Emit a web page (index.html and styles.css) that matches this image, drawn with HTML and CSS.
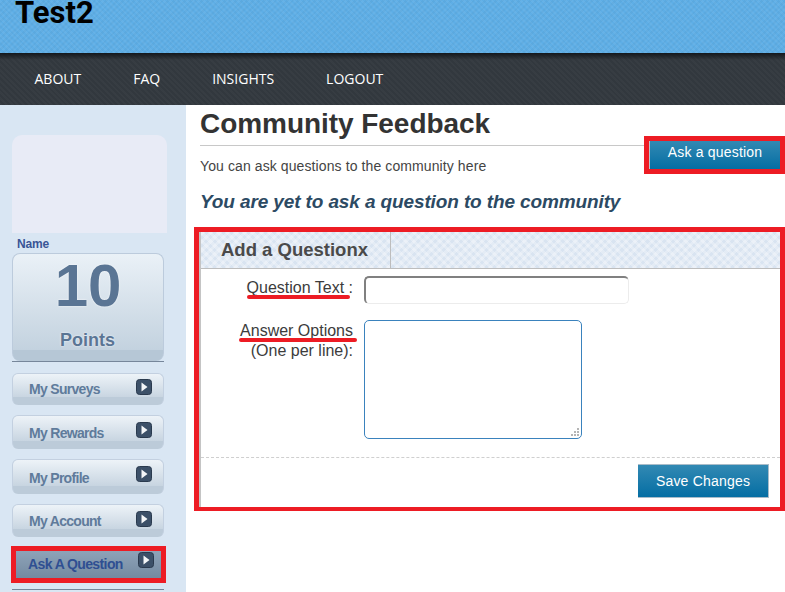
FILE: index.html
```html
<!DOCTYPE html>
<html lang="en">
<head>
<meta charset="utf-8">
<title>Community Feedback</title>
<link rel="stylesheet" href="styles.css">
</head>
<body>
<header class="banner"><h1 class="brand">Test2</h1></header>
<nav class="nav">
  <a>ABOUT</a><a>FAQ</a><a>INSIGHTS</a><a>LOGOUT</a>
</nav>
<div class="layout">
  <aside class="side">
    <div class="avatar"></div>
    <div class="name">Name</div>
    <div class="points"><div class="num">10</div><div class="plabel">Points</div></div>
    <div class="rule"></div>
    <a class="item h32"><span class="t1">My Surveys</span><svg class="arrow" viewBox="0 0 16 16"><rect x="0.5" y="0.5" width="15" height="15" rx="3" fill="#3c5068" stroke="#2a3a4e"/><path d="M5.500 3.500v9l6-4.500z" fill="#f4f6f8"/></svg></a>
    <a class="item h34"><span>My Rewards</span><svg class="arrow" viewBox="0 0 16 16"><rect x="0.5" y="0.5" width="15" height="15" rx="3" fill="#3c5068" stroke="#2a3a4e"/><path d="M5.500 3.500v9l6-4.500z" fill="#f4f6f8"/></svg></a>
    <a class="item h35"><span class="t3">My Profile</span><svg class="arrow" viewBox="0 0 16 16"><rect x="0.5" y="0.5" width="15" height="15" rx="3" fill="#3c5068" stroke="#2a3a4e"/><path d="M5.500 3.500v9l6-4.500z" fill="#f4f6f8"/></svg></a>
    <a class="item h33"><span class="t1">My Account</span><svg class="arrow" viewBox="0 0 16 16"><rect x="0.5" y="0.5" width="15" height="15" rx="3" fill="#3c5068" stroke="#2a3a4e"/><path d="M5.500 3.500v9l6-4.500z" fill="#f4f6f8"/></svg></a>
    <a class="item active"><span class="t3">Ask A Question</span><svg class="arrow" viewBox="0 0 16 16"><rect x="0.5" y="0.5" width="15" height="15" rx="3" fill="#3c5068" stroke="#2a3a4e"/><path d="M5.500 3.500v9l6-4.500z" fill="#f4f6f8"/></svg></a>
    <div class="rule last"></div>
  </aside>
  <main class="main">
    <div class="top">
      <div class="intro">
        <h2 class="title">Community Feedback</h2>
        <p class="lead">You can ask questions to the community here</p>
      </div>
      <div class="ask-mark"><button class="btn ask">Ask a question</button></div>
    </div>
    <h3 class="notice">You are yet to ask a question to the community</h3>
    <section class="panel">
      <div class="inner">
        <div class="tabs"><div class="tab">Add a Questionx</div></div>
        <div class="row first">
          <label class="label"><span class="marked">Question Text</span> :</label>
          <input class="field" type="text">
        </div>
        <div class="row second">
          <label class="label"><span class="marked">Answer Options</span><br>(One per line):</label>
          <div class="area-wrap">
            <textarea class="area"></textarea>
            <svg class="grip" viewBox="0 0 9 9"><path d="M7 1h2v2H7zM4 4h2v2H4zM7 4h2v2H7zM1 7h2v2H1zM4 7h2v2H4zM7 7h2v2H7z" fill="#b5b5b5"/></svg>
          </div>
        </div>
        <div class="actions"><button class="btn save">Save Changes</button></div>
      </div>
    </section>
  </main>
</div>
</body>
</html>
```
FILE: styles.css
```css
* { box-sizing: border-box; }
html, body { margin: 0; height: 592px; overflow: hidden; background: #fff; }
body { font-family: "Liberation Sans", Arial, sans-serif; color: #3a3a3a; }

.banner {
  height: 53px;
  background-color: #5eaee6;
  background-image:
    repeating-linear-gradient(45deg, rgba(255,255,255,.05) 0 2px, transparent 2px 4px),
    repeating-linear-gradient(-45deg, rgba(0,0,0,.03) 0 2px, transparent 2px 4px);
  padding-left: 15px;
  overflow: hidden;
}
.brand {
  margin: 0;
  font: 700 31px/26px Roboto, "Liberation Sans", sans-serif;
  color: #000;
}
.nav {
  height: 52px;
  display: flex;
  align-items: center;
  gap: 52px;
  padding-left: 34.5px;
  background-color: #32383e;
  background-image:
    linear-gradient(#14181c, rgba(20,24,28,0) 7px),
    repeating-linear-gradient(45deg, rgba(255,255,255,.025) 0 2px, transparent 2px 4px);
}
.nav a { font: 14px/1 "Open Sans", sans-serif; color: #fff; }

.layout { display: flex; height: 487px; }

.side {
  width: 186px;
  flex: none;
  background: #d9e6f3;
  padding: 30px 0 0 12px;
}
.avatar {
  width: 155px;
  height: 98px;
  background: #e8ebf6;
  border-radius: 10px 10px 0 0;
}
.name {
  margin: 4px 0 0 5px;
  height: 16px;
  font-size: 12px;
  line-height: 15px;
  font-weight: 700;
  letter-spacing: -.2px;
  color: #3a5596;
}
.points {
  width: 152px;
  height: 108px;
  border: 1px solid #bccbdc;
  border-bottom: 0;
  border-radius: 8px;
  background: linear-gradient(#eaf1f7, #c3d2df 90%, #b6c7d6 90%);
  text-align: center;
  color: #5a7594;
  font-weight: 700;
  text-shadow: 0 0 2px #fff;
}
.num { font-size: 60px; line-height: 62px; margin-top: 1px; }
.plabel { font-size: 18px; line-height: 20px; margin-top: 13px; padding-right: 1px; }
.rule { width: 152px; height: 1px; background: #76869a; }
.item {
  display: flex;
  justify-content: space-between;
  width: 152px;
  padding: 6px 11px 0 16px;
  border: 1px solid #c3d0e0;
  border-bottom: 0;
  border-radius: 6px;
  background: linear-gradient(#edf3f8, #c8d5e1 75%, #bccbd9 75%);
  font-size: 14px;
  font-weight: 700;
  letter-spacing: -.7px;
  color: #5f7b9b;
}
.item span { padding-top: 3px; }
.item span.t1 { padding-top: 2px; }
.item span.t3 { padding-top: 4px; }
.item + .item { margin-top: 10px; }
.h32 { height: 32px; margin-top: 11px; padding-top: 5px; }
.h34 { height: 34px; }
.h35 { height: 35px; }
.h33 { height: 33px; }
.arrow { width: 16px; height: 16px; flex: none; }
.item.active {
  height: 37px;
  margin: 9px 0 0 -1px;
  width: 155px;
  border: 5px solid #ed1c24;
  border-radius: 0;
  background: linear-gradient(#8ea3b8, #748aa1);
  color: #2f4f92;
  letter-spacing: -.6px;
  padding: 1px 7px 0 12px;
}
.rule.last { margin-top: 6px; }

.main { flex: 1; min-width: 0; padding-left: 8px; }
.top { display: flex; height: 84px; }
.intro { width: 450px; padding-left: 6px; }
.title {
  margin: 0;
  height: 41px;
  border-bottom: 1px solid #c8c8c8;
  font-size: 28px;
  line-height: 38px;
  letter-spacing: -.05px;
  font-weight: 700;
  color: #333;
}
.lead { margin: 12px 0 0; font-size: 14px; line-height: 16px; letter-spacing: .1px; color: #444; }
.ask-mark {
  margin-top: 31px;
  width: 141px;
  height: 38px;
  border: 5px solid #ed1c24;
}
.btn {
  display: block;
  border: 0;
  color: #fff;
  font: 14px/1 "Liberation Sans", sans-serif;
  letter-spacing: .2px;
  background: linear-gradient(#3289b3, #056ea3);
  padding: 0;
}
.ask { width: 100%; height: 100%; border-left: 1px solid #b8c4cc; padding-bottom: 6px; }
.notice {
  margin: 0;
  padding-left: 6px;
  height: 38px;
  font-size: 19px;
  line-height: 26px;
  letter-spacing: -.12px;
  font-weight: 700;
  font-style: italic;
  color: #2c4a63;
}
.panel { width: 591px; height: 284px; border: 5px solid #ed1c24; border-bottom-width: 4px; }
.inner { height: 100%; border-left: 2px solid #c4c4c4; }
.tabs {
  height: 37px;
  border-bottom: 1px solid #bdbdbd;
  background-color: #d9e4f1;
  background-image:
    repeating-linear-gradient(45deg, rgba(255,255,255,.28) 0 3px, transparent 3px 6px),
    repeating-linear-gradient(-45deg, rgba(255,255,255,.28) 0 3px, transparent 3px 6px);
}
.tab {
  width: 190px;
  height: 36px;
  border-right: 1px solid #bdbdbd;
  padding-left: 20px;
  font-size: 18.5px;
  line-height: 35px;
  font-weight: 700;
  color: #4a4a4a;
}
.row { display: grid; grid-template-columns: 152px 1fr; column-gap: 11px; }
.first { margin-top: 7px; height: 44px; }
.first .label { padding-top: 2px; }
.second { height: 137px; }
.label { font-size: 16px; line-height: 20px; text-align: right; color: #3c3c3c; padding-top: 1px; }
.marked { position: relative; }
.marked::after {
  content: "";
  position: absolute;
  left: 0;
  right: -6px;
  bottom: -3px;
  height: 4px;
  border-radius: 2px;
  background: #ed1c24;
}
.second .marked::after { right: -4px; left: -1px; bottom: -3px; }
.field {
  display: block;
  width: 265px;
  height: 28px;
  border: 1px solid #ececec;
  border-top: 2px solid #808080;
  border-left: 2px solid #808080;
  border-radius: 5px;
  background: #fff;
}
.area-wrap { position: relative; width: 218px; height: 119px; }
.area {
  display: block;
  width: 100%;
  height: 100%;
  margin: 0;
  border: 1px solid #3a82bd;
  border-radius: 5px;
  background: #fff;
  resize: none;
}
.grip { position: absolute; right: 3px; bottom: 3px; width: 9px; height: 9px; }
.actions {
  border-top: 1px dashed #cfcfcf;
  padding: 6px 0 0 437px;
}
.save { width: 131px; height: 34px; border: 1px solid #a9bcc9; border-width: 1px 1px 1px 0; }
```
